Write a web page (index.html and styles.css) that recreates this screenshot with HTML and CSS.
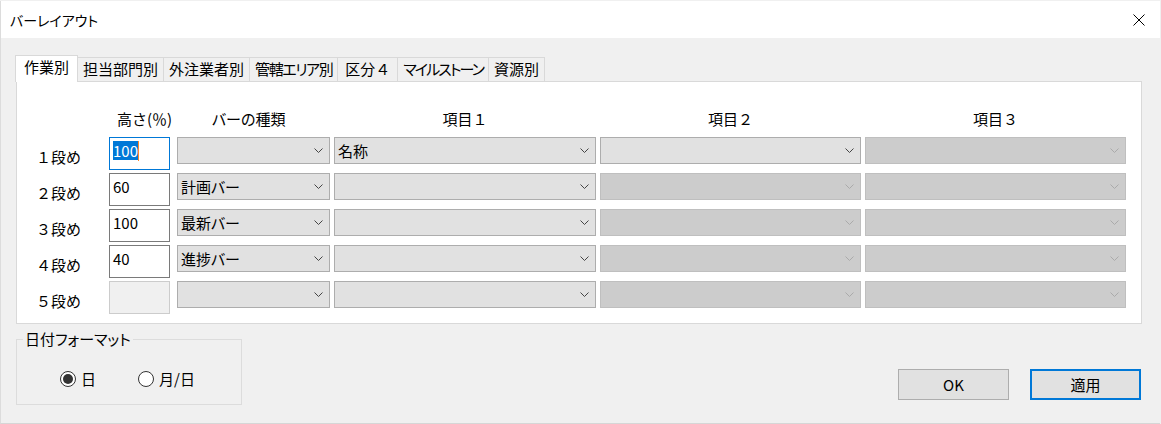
FILE: index.html
```html
<!DOCTYPE html>
<html lang="ja">
<head>
<meta charset="utf-8">
<title>バーレイアウト</title>
<link rel="stylesheet" href="styles.css">
</head>
<body>
<div class="window">
  <div class="titlebar">
    <span class="title">バーレイアウト</span>
    <svg class="close" width="12" height="12" viewBox="0 0 12 12"><path d="M0.5 0.5 L11.5 11.5 M11.5 0.5 L0.5 11.5" stroke="#000" stroke-width="1" fill="none"/></svg>
  </div>
  <div class="content">
    <div class="tabs">
      <div class="tab active">作業別</div>
      <div class="tab">担当部門別</div>
      <div class="tab">外注業者別</div>
      <div class="tab tight">管轄エリア別</div>
      <div class="tab wide">区分４</div>
      <div class="tab tighter">マイルストーン</div>
      <div class="tab">資源別</div>
    </div>
    <div class="panel">
      <div class="grid">
        <div></div>
        <div class="hdr hdr-h">高さ(％)</div>
        <div class="hdr hdr-type">バーの種類</div>
        <div class="hdr hdr-c">項目１</div>
        <div class="hdr hdr-c">項目２</div>
        <div class="hdr hdr-c">項目３</div>

        <div class="rowlabel">１段め</div>
        <div class="edit focus"><span class="sel">100</span><span class="caret"></span></div>
        <div class="combo"><span></span><svg class="chev" width="9" height="5" viewBox="0 0 9 5"><path d="M0.5 0.5 L4.5 4.5 L8.5 0.5"/></svg></div>
        <div class="combo"><span>名称</span><svg class="chev" width="9" height="5" viewBox="0 0 9 5"><path d="M0.5 0.5 L4.5 4.5 L8.5 0.5"/></svg></div>
        <div class="combo"><span></span><svg class="chev" width="9" height="5" viewBox="0 0 9 5"><path d="M0.5 0.5 L4.5 4.5 L8.5 0.5"/></svg></div>
        <div class="combo off"><span></span><svg class="chev" width="9" height="5" viewBox="0 0 9 5"><path d="M0.5 0.5 L4.5 4.5 L8.5 0.5"/></svg></div>

        <div class="rowlabel">２段め</div>
        <div class="edit">60</div>
        <div class="combo"><span>計画バー</span><svg class="chev" width="9" height="5" viewBox="0 0 9 5"><path d="M0.5 0.5 L4.5 4.5 L8.5 0.5"/></svg></div>
        <div class="combo"><span></span><svg class="chev" width="9" height="5" viewBox="0 0 9 5"><path d="M0.5 0.5 L4.5 4.5 L8.5 0.5"/></svg></div>
        <div class="combo off"><span></span><svg class="chev" width="9" height="5" viewBox="0 0 9 5"><path d="M0.5 0.5 L4.5 4.5 L8.5 0.5"/></svg></div>
        <div class="combo off"><span></span><svg class="chev" width="9" height="5" viewBox="0 0 9 5"><path d="M0.5 0.5 L4.5 4.5 L8.5 0.5"/></svg></div>

        <div class="rowlabel">３段め</div>
        <div class="edit">100</div>
        <div class="combo"><span>最新バー</span><svg class="chev" width="9" height="5" viewBox="0 0 9 5"><path d="M0.5 0.5 L4.5 4.5 L8.5 0.5"/></svg></div>
        <div class="combo"><span></span><svg class="chev" width="9" height="5" viewBox="0 0 9 5"><path d="M0.5 0.5 L4.5 4.5 L8.5 0.5"/></svg></div>
        <div class="combo off"><span></span><svg class="chev" width="9" height="5" viewBox="0 0 9 5"><path d="M0.5 0.5 L4.5 4.5 L8.5 0.5"/></svg></div>
        <div class="combo off"><span></span><svg class="chev" width="9" height="5" viewBox="0 0 9 5"><path d="M0.5 0.5 L4.5 4.5 L8.5 0.5"/></svg></div>

        <div class="rowlabel">４段め</div>
        <div class="edit">40</div>
        <div class="combo"><span>進捗バー</span><svg class="chev" width="9" height="5" viewBox="0 0 9 5"><path d="M0.5 0.5 L4.5 4.5 L8.5 0.5"/></svg></div>
        <div class="combo"><span></span><svg class="chev" width="9" height="5" viewBox="0 0 9 5"><path d="M0.5 0.5 L4.5 4.5 L8.5 0.5"/></svg></div>
        <div class="combo off"><span></span><svg class="chev" width="9" height="5" viewBox="0 0 9 5"><path d="M0.5 0.5 L4.5 4.5 L8.5 0.5"/></svg></div>
        <div class="combo off"><span></span><svg class="chev" width="9" height="5" viewBox="0 0 9 5"><path d="M0.5 0.5 L4.5 4.5 L8.5 0.5"/></svg></div>

        <div class="rowlabel">５段め</div>
        <div class="edit disabled"></div>
        <div class="combo"><span></span><svg class="chev" width="9" height="5" viewBox="0 0 9 5"><path d="M0.5 0.5 L4.5 4.5 L8.5 0.5"/></svg></div>
        <div class="combo"><span></span><svg class="chev" width="9" height="5" viewBox="0 0 9 5"><path d="M0.5 0.5 L4.5 4.5 L8.5 0.5"/></svg></div>
        <div class="combo off"><span></span><svg class="chev" width="9" height="5" viewBox="0 0 9 5"><path d="M0.5 0.5 L4.5 4.5 L8.5 0.5"/></svg></div>
        <div class="combo off"><span></span><svg class="chev" width="9" height="5" viewBox="0 0 9 5"><path d="M0.5 0.5 L4.5 4.5 L8.5 0.5"/></svg></div>
      </div>
    </div>
    <div class="bottom">
      <fieldset class="group">
        <legend>日付フォーマット</legend>
        <div class="radios">
          <label class="opt first"><span class="radio on"></span>日</label>
          <label class="opt"><span class="radio"></span>月/日</label>
        </div>
      </fieldset>
      <div class="buttons">
        <div class="btn">OK</div>
        <div class="btn default">適用</div>
      </div>
    </div>
  </div>
</div>
</body>
</html>
```

FILE: styles.css
```css
* { box-sizing: border-box; }

body {
  margin: 0;
  background: #f0f0f0;
  font-family: "Noto Sans CJK JP", "Noto Sans", sans-serif;
  font-size: 15px;
  color: #000;
}

.window {
  margin-top: 1px;
  width: 1160px;
  height: 423px;
  background: #f0f0f0;
  border-left: 1px solid #dcdcdc;
  border-bottom: 1px solid #d6d6d6;
}

.titlebar {
  height: 37px;
  background: #fff;
  display: flex;
  align-items: center;
  padding-left: 9px;
}

.title {
  font-size: 14px;
  font-feature-settings: "palt";
}

.close {
  margin-left: auto;
  margin-right: 15px;
}

.content {
  padding: 17px 18px 0 15px;
}

.tabs {
  display: flex;
  align-items: flex-end;
  height: 26px;
  margin-left: -1px;
}

.tab {
  height: 24px;
  border: 1px solid #d9d9d9;
  border-bottom: none;
  margin-left: -1px;
  padding: 1px 5px 0;
  line-height: 20px;
  background: #f0f0f0;
}

.tab.tight {
  font-feature-settings: "palt";
  letter-spacing: -1.4px;
}

.tab.tighter {
  font-feature-settings: "palt";
  letter-spacing: -1.9px;
}

.tab.wide { padding: 1px 7px 0; }

.tab.active {
  height: 27px;
  margin-left: 0;
  margin-bottom: -1px;
  padding: 1px 8px 0;
  background: #fff;
  position: relative;
  z-index: 1;
}

.panel {
  background: #fff;
  border: 1px solid #d9d9d9;
  padding: 27px 0 9px 19px;
}

.grid {
  display: grid;
  grid-template-columns: 69px 64px 153px 262px 261px 261px;
  grid-template-rows: 25px repeat(5, 33px);
  column-gap: 4px;
  row-gap: 3px;
}

.hdr {
  align-self: start;
  line-height: 20px;
}

.hdr-h { padding-left: 8px; }
.hdr-type { padding-left: 35px; font-feature-settings: "palt"; }
.hdr-c { text-align: center; }

.rowlabel {
  display: flex;
  align-items: center;
  padding-top: 6px;
}

.edit {
  width: 61px;
  height: 33px;
  border: 1px solid #7a7a7a;
  background: #fff;
  padding: 3px 0 0 3px;
  line-height: 19px;
}

.edit.focus { border-color: #0078d7; }

.edit.disabled {
  background: #f0f0f0;
  border-color: #cccccc;
}

.sel {
  display: inline-block;
  vertical-align: top;
  line-height: 19px;
  background: #0078d7;
  color: #fff;
}

.caret {
  display: inline-block;
  vertical-align: top;
  width: 1px;
  height: 20px;
  background: #ff8728;
}

.combo {
  align-self: start;
  height: 27px;
  border: 1px solid #adadad;
  background: #e1e1e1;
  display: flex;
  align-items: center;
  padding: 0 6px 0 3px;
  font-feature-settings: "palt";
}

.combo .chev {
  margin-left: auto;
  fill: none;
  stroke: #444;
  stroke-width: 1;
}

.combo.off {
  background: #cccccc;
  border-color: #bfbfbf;
}

.combo.off .chev { stroke: #aaaaaa; }

.bottom {
  display: flex;
  align-items: flex-start;
}

.group {
  width: 226px;
  margin: 5px 0 0;
  padding: 0;
  border: 1px solid #dcdcdc;
}

.group legend {
  margin-left: 6px;
  padding: 0 2px;
  line-height: 20px;
  font-feature-settings: "palt";
}

.radios {
  display: flex;
  align-items: center;
  height: 55px;
  padding: 20px 0 15px 43px;
  line-height: 20px;
}

.opt {
  display: flex;
  align-items: center;
}

.opt.first { margin-right: 42px; }

.radio {
  width: 16px;
  height: 16px;
  border-radius: 50%;
  border: 1px solid #333;
  background: #fff;
  margin-right: 5px;
  display: flex;
  align-items: center;
  justify-content: center;
}

.radio.on::after {
  content: "";
  width: 10px;
  height: 10px;
  border-radius: 50%;
  background: #333;
}

.buttons {
  margin-left: auto;
  margin-right: 1px;
  margin-top: 45px;
  display: flex;
  gap: 21px;
}

.btn {
  width: 111px;
  height: 31px;
  border: 1px solid #adadad;
  background: #e1e1e1;
  display: flex;
  align-items: center;
  justify-content: center;
  line-height: 20px;
}

.btn.default { border: 2px solid #0078d7; }
```
